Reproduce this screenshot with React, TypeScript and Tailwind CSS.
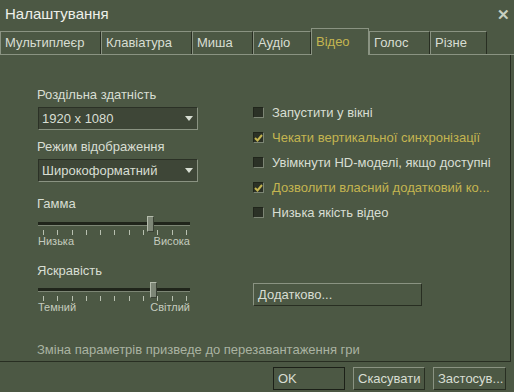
import React from "react";

const tabs = [
  { label: "Мультиплеєр", w: "w-[101px]" },
  { label: "Клавіатура", w: "w-[91px]" },
  { label: "Миша", w: "w-[61px]" },
  { label: "Аудіо", w: "w-[58px]" },
  { label: "Відео", w: "w-[58px]", active: true },
  { label: "Голос", w: "w-[61px]" },
  { label: "Різне", w: "w-[57px]" },
];

const options = [
  { label: "Запустити у вікні", checked: false },
  { label: "Чекати вертикальної синхронізації", checked: true },
  { label: "Увімкнути HD-моделі, якщо доступні", checked: false },
  { label: "Дозволити власний додатковий ко...", checked: true },
  { label: "Низька якість відео", checked: false },
];

function Dropdown({ value }: { value: string }) {
  return (
    <div className="flex h-[23px] w-[160px] items-center justify-between border border-t-[#2b3126] border-l-[#2b3126] border-b-[#8a9382] border-r-[#8a9382] bg-[#3e4637] pl-[3px] pr-[4px] text-[13px] text-[#d8ded3]">
      <span>{value}</span>
      <svg width="8" height="5" viewBox="0 0 8 5">
        <path d="M0 0h8L4 5z" fill="#d8ded3" />
      </svg>
    </div>
  );
}

function Slider({ pos, low, high }: { pos: string; low: string; high: string }) {
  return (
    <div className="relative h-[34px] w-[152px]">
      <div className="absolute left-0 right-0 top-[7px] h-[3px] bg-[#20251b]" />
      <div className="absolute left-0 right-0 top-[10px] h-px bg-[#7c8574]" />
      <div
        className={`absolute top-[1px] h-[16px] w-[7px] border border-t-[#b4bcac] border-l-[#b4bcac] border-b-[#3a4134] border-r-[#3a4134] bg-[#7d8676] ${pos}`}
      />
      <div className="absolute left-0 right-0 top-[15px] flex justify-between pl-[5px] pr-[3px]">
        {Array.from({ length: 11 }).map((_, i) => (
          <div key={i} className="h-[5px] w-px bg-[#b8c0b0]" />
        ))}
      </div>
      <div className="absolute left-0 right-0 top-[19px] flex justify-between text-[11px] leading-[14px] text-[#c4cbbe]">
        <span>{low}</span>
        <span>{high}</span>
      </div>
    </div>
  );
}

function Button({ label, w, focus }: { label: string; w: string; focus?: boolean }) {
  return (
    <div
      className={`flex h-[23px] items-center pl-[4px] text-[13px] text-[#d8ded3] ${w} ${
        focus
          ? "border border-[#1c2018] bg-[#4c5844]"
          : "border border-t-[#8a9382] border-l-[#8a9382] border-b-[#282e22] border-r-[#282e22] bg-[#4c5844]"
      }`}
    >
      {label}
    </div>
  );
}

export default function App() {
  return (
    <div
      className="flex h-[392px] w-[514px] flex-col overflow-hidden bg-[#4c5844] text-[#d8ded3]"
      style={{ fontFamily: '"Liberation Sans", Arial, sans-serif' }}
    >
      <div className="flex h-[28px] items-center justify-between pl-[5px] pr-[4px]">
        <span className="text-[15px] text-[#eef0ea]">Налаштування</span>
        <span className="text-[15px] font-bold leading-none text-[#c8cfc1]">✕</span>
      </div>

      <div className="flex h-[27px] items-end border-b border-[#8a9382]">
        {tabs.map((t) => (
          <div
            key={t.label}
            className={`flex items-center border-l border-t border-r pl-[4px] text-[13px] ${t.w} ${
              t.active
                ? "-mb-px h-[27px] border-l-[#8a9382] border-t-[#8a9382] border-r-[#8a9382] bg-[#4c5844] text-[#c4b550]"
                : "h-[23px] border-l-[#8a9382] border-t-[#8a9382] border-r-[#282e22] text-[#d8ded3]"
            }`}
          >
            {t.label}
          </div>
        ))}
        <div className="w-[27px]" />
      </div>

      <div className="flex h-[307px] w-[511px] flex-col border-b border-r border-[#282e22]">
        <div className="flex pl-[37px]">
          <div className="flex w-[216px] flex-col">
            <div className="mt-[32px] h-[16px] text-[13px] leading-[16px]">Роздільна здатність</div>
            <div className="ml-px mt-[4px]">
              <Dropdown value="1920 x 1080" />
            </div>
            <div className="mt-[9px] h-[16px] text-[13px] leading-[16px]">Режим відображення</div>
            <div className="ml-px mt-[4px]">
              <Dropdown value="Широкоформатний" />
            </div>
            <div className="mt-[14px] h-[16px] text-[13px] leading-[16px]">Гамма</div>
            <div className="ml-px mt-[3px]">
              <Slider pos="left-[109px]" low="Низька" high="Висока" />
            </div>
            <div className="mt-[14px] h-[16px] text-[13px] leading-[16px]">Яскравість</div>
            <div className="ml-px mt-[2px]">
              <Slider pos="left-[112px]" low="Темний" high="Світлий" />
            </div>
          </div>

          <div className="flex flex-col">
            <div className="mt-[45px] flex flex-col">
              {options.map((o) => (
                <div key={o.label} className="flex h-[25px] items-center gap-[8px]">
                  <div className="flex h-[11px] w-[11px] items-center justify-center border border-t-[#20251b] border-l-[#20251b] border-b-[#7c8574] border-r-[#7c8574] bg-[#2b3126]">
                    {o.checked && (
                      <svg width="9" height="8" viewBox="0 0 9 8">
                        <path d="M1 4l2.5 2.5L8 1" stroke="#c4b550" strokeWidth="2" fill="none" />
                      </svg>
                    )}
                  </div>
                  <span className={`text-[13px] ${o.checked ? "text-[#c4b550]" : "text-[#d8ded3]"}`}>{o.label}</span>
                </div>
              ))}
            </div>
            <div className="mt-[58px]">
              <Button label="Додатково..." w="w-[169px]" />
            </div>
          </div>
        </div>
        <div className="mb-[3px] mt-auto h-[16px] pl-[37px] text-[13px] leading-[16px] text-[#aab3a2]">
          Зміна параметрів призведе до перезавантаження гри
        </div>
      </div>

      <div className="flex justify-end gap-[8px] pr-[8px] pt-[5px]">
        <Button label="OK" w="w-[72px]" focus />
        <Button label="Скасувати" w="w-[72px]" />
        <Button label="Застосув..." w="w-[73px]" />
      </div>
    </div>
  );
}
